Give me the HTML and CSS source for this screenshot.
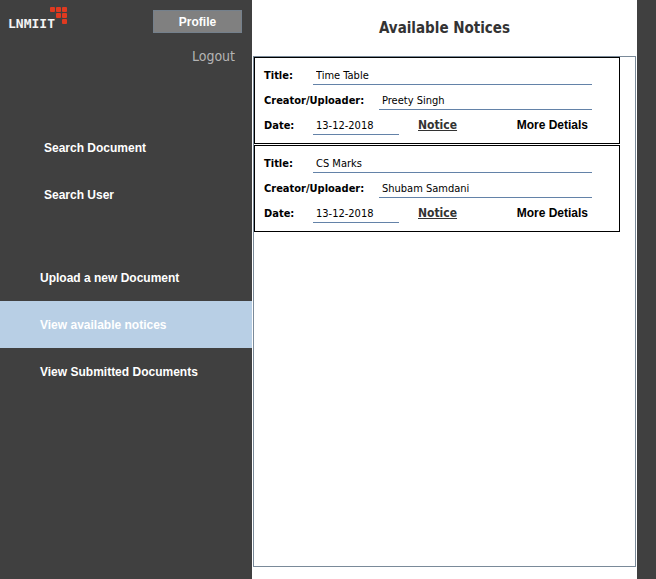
FILE: index.html
```html
<!DOCTYPE html>
<html lang="en">
<head>
<meta charset="utf-8">
<title>Available Notices</title>
<link rel="stylesheet" href="styles.css">
</head>
<body>
<aside class="sidebar">
  <header class="top">
    <div class="logo">
      <span class="logo-text">LNMIIT</span>
      <svg class="logo-mark" width="18" height="18" viewBox="0 0 18 18" fill="#e03a20" aria-hidden="true">
        <rect x="0" y="0" width="5" height="5" rx="1"/>
        <rect x="6" y="0" width="5" height="5" rx="1"/>
        <rect x="12" y="0" width="5" height="5" rx="1"/>
        <rect x="6" y="6" width="5" height="5" rx="1"/>
        <rect x="12" y="6" width="5" height="5" rx="1"/>
        <rect x="12" y="12" width="5" height="5" rx="1"/>
      </svg>
    </div>
    <button class="profile" type="button">Profile</button>
  </header>
  <a class="logout" href="#">Logout</a>
  <nav class="menu search">
    <a href="#">Search Document</a>
    <a href="#">Search User</a>
  </nav>
  <nav class="menu documents">
    <a href="#">Upload a new Document</a>
    <a class="active" href="#" aria-current="page">View available notices</a>
    <a href="#">View Submitted Documents</a>
  </nav>
</aside>
<main class="content">
  <h1>Available Notices</h1>
  <section class="notices">
    <article class="notice">
      <div class="row">
        <label class="short" for="title1">Title:</label>
        <input id="title1" type="text" value="Time Table">
      </div>
      <div class="row">
        <label class="long" for="creator1">Creator/Uploader:</label>
        <input id="creator1" type="text" value="Preety Singh">
      </div>
      <div class="row">
        <label class="short" for="date1">Date:</label>
        <input class="date" id="date1" type="text" value="13-12-2018">
        <a class="link" href="#">Notice</a>
        <button class="more" type="button">More Detials</button>
      </div>
    </article>
    <article class="notice">
      <div class="row">
        <label class="short" for="title2">Title:</label>
        <input id="title2" type="text" value="CS Marks">
      </div>
      <div class="row">
        <label class="long" for="creator2">Creator/Uploader:</label>
        <input id="creator2" type="text" value="Shubam Samdani">
      </div>
      <div class="row">
        <label class="short" for="date2">Date:</label>
        <input class="date" id="date2" type="text" value="13-12-2018">
        <a class="link" href="#">Notice</a>
        <button class="more" type="button">More Detials</button>
      </div>
    </article>
  </section>
</main>
</body>
</html>
```
FILE: styles.css
```css
* {
  box-sizing: border-box;
}

body {
  margin: 0;
  min-height: 100vh;
  display: flex;
  padding-right: 19px;
  background: #404040;
  color: #000;
  font-family: Tahoma, "DejaVu Sans Condensed", "Noto Sans", sans-serif;
  font-size: 11px;
}

a {
  color: inherit;
  text-decoration: none;
}

button {
  font: bold 12px "Liberation Sans", Arial, sans-serif;
}

.sidebar {
  flex: 0 0 252px;
  display: flex;
  flex-direction: column;
}

.top {
  display: flex;
  justify-content: space-between;
  align-items: flex-start;
  padding: 7px 10px 0 8px;
}

.logo {
  display: flex;
  align-items: flex-start;
}

.logo-text {
  width: 42px;
  padding-top: 9px;
  color: #f4f4f4;
  font: bold 13px/16px "DejaVu Sans Mono", monospace;
}

.profile {
  width: 89px;
  height: 23px;
  margin-top: 3px;
  padding: 0;
  border: 1px solid #74808c;
  background: #808080;
  color: #fff;
}

.logout {
  align-self: flex-end;
  margin: 13px 17px 0 0;
  color: #b4b4b4;
  font-size: 14px;
  line-height: 20px;
}

.menu {
  display: flex;
  flex-direction: column;
  color: #fff;
  font: bold 12px/45px "Liberation Sans", Arial, sans-serif;
}

.menu a {
  padding: 2px 0 0 40px;
}

.search {
  margin-top: 58px;
}

.search a {
  padding-left: 44px;
}

.documents {
  margin-top: 36px;
}

.menu .active {
  background: #b8cfe5;
}

.content {
  flex: 1;
  min-width: 0;
  display: flex;
  flex-direction: column;
  padding: 0 1px 12px;
  background: #fff;
}

h1 {
  margin: 0;
  color: #333;
  font-size: 15px;
  line-height: 56px;
  text-align: center;
}

.notices {
  flex: 1;
  display: flex;
  flex-direction: column;
  gap: 1px;
  padding-right: 15px;
  border: 1px solid #7a8a99;
}

.notice {
  padding: 2px 27px 8px 9px;
  border: 1px solid #000;
}

.row {
  display: flex;
  align-items: flex-end;
  height: 25px;
}

label {
  flex: none;
  font-weight: bold;
  line-height: 19px;
}

.short {
  width: 49px;
}

.long {
  width: 115px;
}

input {
  flex: 1;
  min-width: 0;
  height: 19px;
  padding: 0 0 0 3px;
  border: 0;
  border-bottom: 1px solid #6382a8;
  background: none;
  color: #000;
  font: inherit;
}

.date {
  flex: 0 0 86px;
}

.link {
  margin-left: 19px;
  color: #333;
  font-size: 12px;
  font-weight: bold;
  line-height: 19px;
  text-decoration: underline;
}

.more {
  margin-left: auto;
  padding: 0 4px 0 0;
  border: 0;
  background: none;
  line-height: 19px;
}
```
